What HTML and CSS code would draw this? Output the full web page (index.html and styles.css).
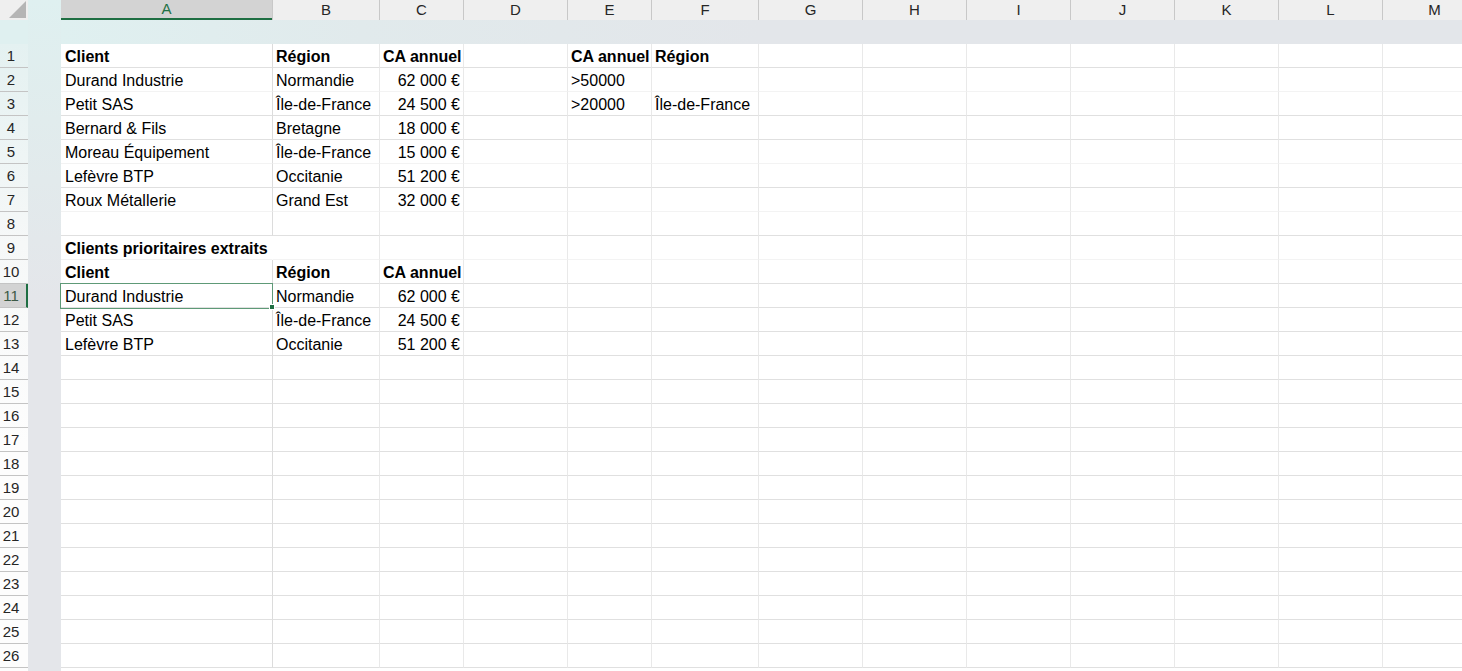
FILE: index.html
```html
<!DOCTYPE html>
<html lang="fr">
    <head>
        <meta charset="UTF-8" />
        <title>Feuil1</title>
        <link rel="stylesheet" href="styles.css">
    </head>
    <body>
        <div class="sheet">
            <div class="corner"><span class="corner-mark"></span></div>
            <div class="gutter"></div>
            <div class="col-heads" id="colHeads"></div>
            <div class="band band-left"></div>
            <div class="band band-right"></div>
            <div class="row-heads" id="rowHeads"></div>
            <div class="cells" id="cells"></div>
        </div>

        <script>
            const cols = ['A', 'B', 'C', 'D', 'E', 'F', 'G', 'H', 'I', 'J', 'K', 'L', 'M'];
            const rowCount = 26;
            const selCol = 'A';
            const selRow = 11;
            // lignes dont le trait du bas est plus clair
            const faintRows = [2, 5, 7, 9];

            // contenu : ligne -> { colonne: [texte, type] }
            const data = {
                1: { A: ['Client', 'b'], B: ['Région', 'b'], C: ['CA annuel', 'b'], E: ['CA annuel', 'b'], F: ['Région', 'b'] },
                2: { A: ['Durand Industrie'], B: ['Normandie'], C: ['62 000 €', 'n'], E: ['>50000'] },
                3: { A: ['Petit SAS'], B: ['Île-de-France'], C: ['24 500 €', 'n'], E: ['>20000'], F: ['Île-de-France'] },
                4: { A: ['Bernard & Fils'], B: ['Bretagne'], C: ['18 000 €', 'n'] },
                5: { A: ['Moreau Équipement'], B: ['Île-de-France'], C: ['15 000 €', 'n'] },
                6: { A: ['Lefèvre BTP'], B: ['Occitanie'], C: ['51 200 €', 'n'] },
                7: { A: ['Roux Métallerie'], B: ['Grand Est'], C: ['32 000 €', 'n'] },
                9: { A: ['Clients prioritaires extraits', 'b spill'] },
                10: { A: ['Client', 'b'], B: ['Région', 'b'], C: ['CA annuel', 'b'] },
                11: { A: ['Durand Industrie'], B: ['Normandie'], C: ['62 000 €', 'n'] },
                12: { A: ['Petit SAS'], B: ['Île-de-France'], C: ['24 500 €', 'n'] },
                13: { A: ['Lefèvre BTP'], B: ['Occitanie'], C: ['51 200 €', 'n'] }
            };

            const colHeads = document.getElementById('colHeads');
            cols.forEach(function (c) {
                const h = document.createElement('div');
                h.className = 'col-head' + (c === selCol ? ' active' : '');
                h.textContent = c;
                colHeads.appendChild(h);
            });

            const rowHeads = document.getElementById('rowHeads');
            const cells = document.getElementById('cells');
            for (let r = 1; r <= rowCount; r++) {
                const rh = document.createElement('div');
                rh.className = 'row-head' + (r === selRow ? ' active' : '');
                rh.textContent = r;
                rowHeads.appendChild(rh);

                cols.forEach(function (c) {
                    const cell = document.createElement('div');
                    let cls = 'cell col-' + c;
                    if (faintRows.indexOf(r) !== -1) cls += ' faint';
                    const v = data[r] && data[r][c];
                    if (v) {
                        cell.textContent = v[0];
                        if (v[1]) cls += ' ' + v[1];
                    }
                    // le texte débordant de A9 masque le trait de B9
                    if (r === 9 && c === 'B') cls += ' after-spill';
                    if (r === selRow && c === selCol) cls += ' selected';
                    cell.className = cls;
                    cells.appendChild(cell);
                });
            }
        </script>
    </body>
</html>
```

FILE: styles.css
```css
body {
    margin: 0;
    overflow: hidden;
    font-family: "Liberation Sans", Arial, sans-serif;
    font-size: 16px;
    color: #000;
}

.sheet {
    display: grid;
    grid-template-columns: 28px 33px 1fr;
    grid-template-rows: 20px 24px 1fr;
    height: 671px;
    width: 1462px;
    overflow: hidden;
    background: #e4e6ea;
}

.corner {
    grid-column: 1;
    grid-row: 1;
    background: #efefef;
    position: relative;
}
.corner-mark {
    position: absolute;
    right: 2px;
    bottom: 2px;
    width: 0;
    height: 0;
    border-left: 17px solid transparent;
    border-bottom: 17px solid #b5b5b5;
}

/* bande grise verticale entre numéros et grille */
.gutter {
    grid-column: 2;
    grid-row: 1 / 4;
    background: linear-gradient(180deg, #dff0f0 0px, #e1eced 120px, #e4e6ea 300px);
}

.band {
    grid-row: 2;
}
.band-left {
    grid-column: 1;
    background: #dff0f0;
}
.band-right {
    grid-column: 3;
    background: linear-gradient(90deg, #dff0f0 0px, #e1eaec 300px, #e3e6ea 700px);
}

.col-heads {
    grid-column: 3;
    grid-row: 1;
    display: grid;
    grid-template-columns: 211px 107px 84px 104px 84px 107px 104px 104px 104px 104px 104px 104px 104px;
    background: #efefef;
}
.col-head {
    box-sizing: border-box;
    height: 20px;
    line-height: 19px;
    font-size: 15px;
    text-align: center;
    color: #262626;
    border-left: 1px solid #c8c8c8;
}
.col-head:first-child {
    border-left: none;
}
.col-head.active {
    background: #d3d3d3;
    color: #1f7145;
    border-bottom: 2px solid #1e6e42;
    line-height: 18px;
}

.row-heads {
    grid-column: 1;
    grid-row: 3;
    display: flex;
    flex-direction: column;
    background: linear-gradient(180deg, #e4f1f1 0px, #f6f8f8 200px, #fdfdfd 400px);
}
.row-head {
    box-sizing: border-box;
    flex: 0 0 24px;
    height: 24px;
    line-height: 24px;
    padding-right: 6px;
    font-size: 15px;
    text-align: center;
    color: #262626;
    border-bottom: 1px solid #c4c4c4;
}
.row-head.active {
    background: #d3d3d3;
    color: #3c5a46;
    border-right: 2px solid #1e6e42;
    padding-right: 4px;
}

.cells {
    grid-column: 3;
    grid-row: 3;
    display: grid;
    grid-template-columns: 211px 107px 84px 104px 84px 107px 104px 104px 104px 104px 104px 104px 104px;
    grid-auto-rows: 24px;
    align-content: start;
    background: #fff;
}
.cell {
    box-sizing: border-box;
    height: 24px;
    line-height: 25px;
    padding: 0 3px 0 3px;
    white-space: nowrap;
    overflow: hidden;
    border-left: 1px solid #e9e9e9;
    border-bottom: 1px solid #e0e0e0;
    background: #fff;
}
.cell.col-A {
    border-left: none;
    padding-left: 4px;
}
.cell.col-B {
    border-left-color: #dcdcdc;
}
.cell.faint {
    border-bottom-color: #f3f3f3;
}
.cell.b {
    font-weight: bold;
}
.cell.n {
    text-align: right;
    padding: 0 3px 0 2px;
}
.cell.spill {
    overflow: visible;
    position: relative;
    z-index: 1;
}
.cell.after-spill {
    border-left-color: #fff;
}
.cell.selected {
    position: relative;
    box-shadow: 0 0 0 1px #5e9a77;
    overflow: visible;
    z-index: 1;
}
.cell.selected::after {
    content: "";
    position: absolute;
    right: -3px;
    bottom: -3px;
    width: 4px;
    height: 4px;
    background: #1e6e42;
    border: 1px solid #fff;
    z-index: 2;
}
```
